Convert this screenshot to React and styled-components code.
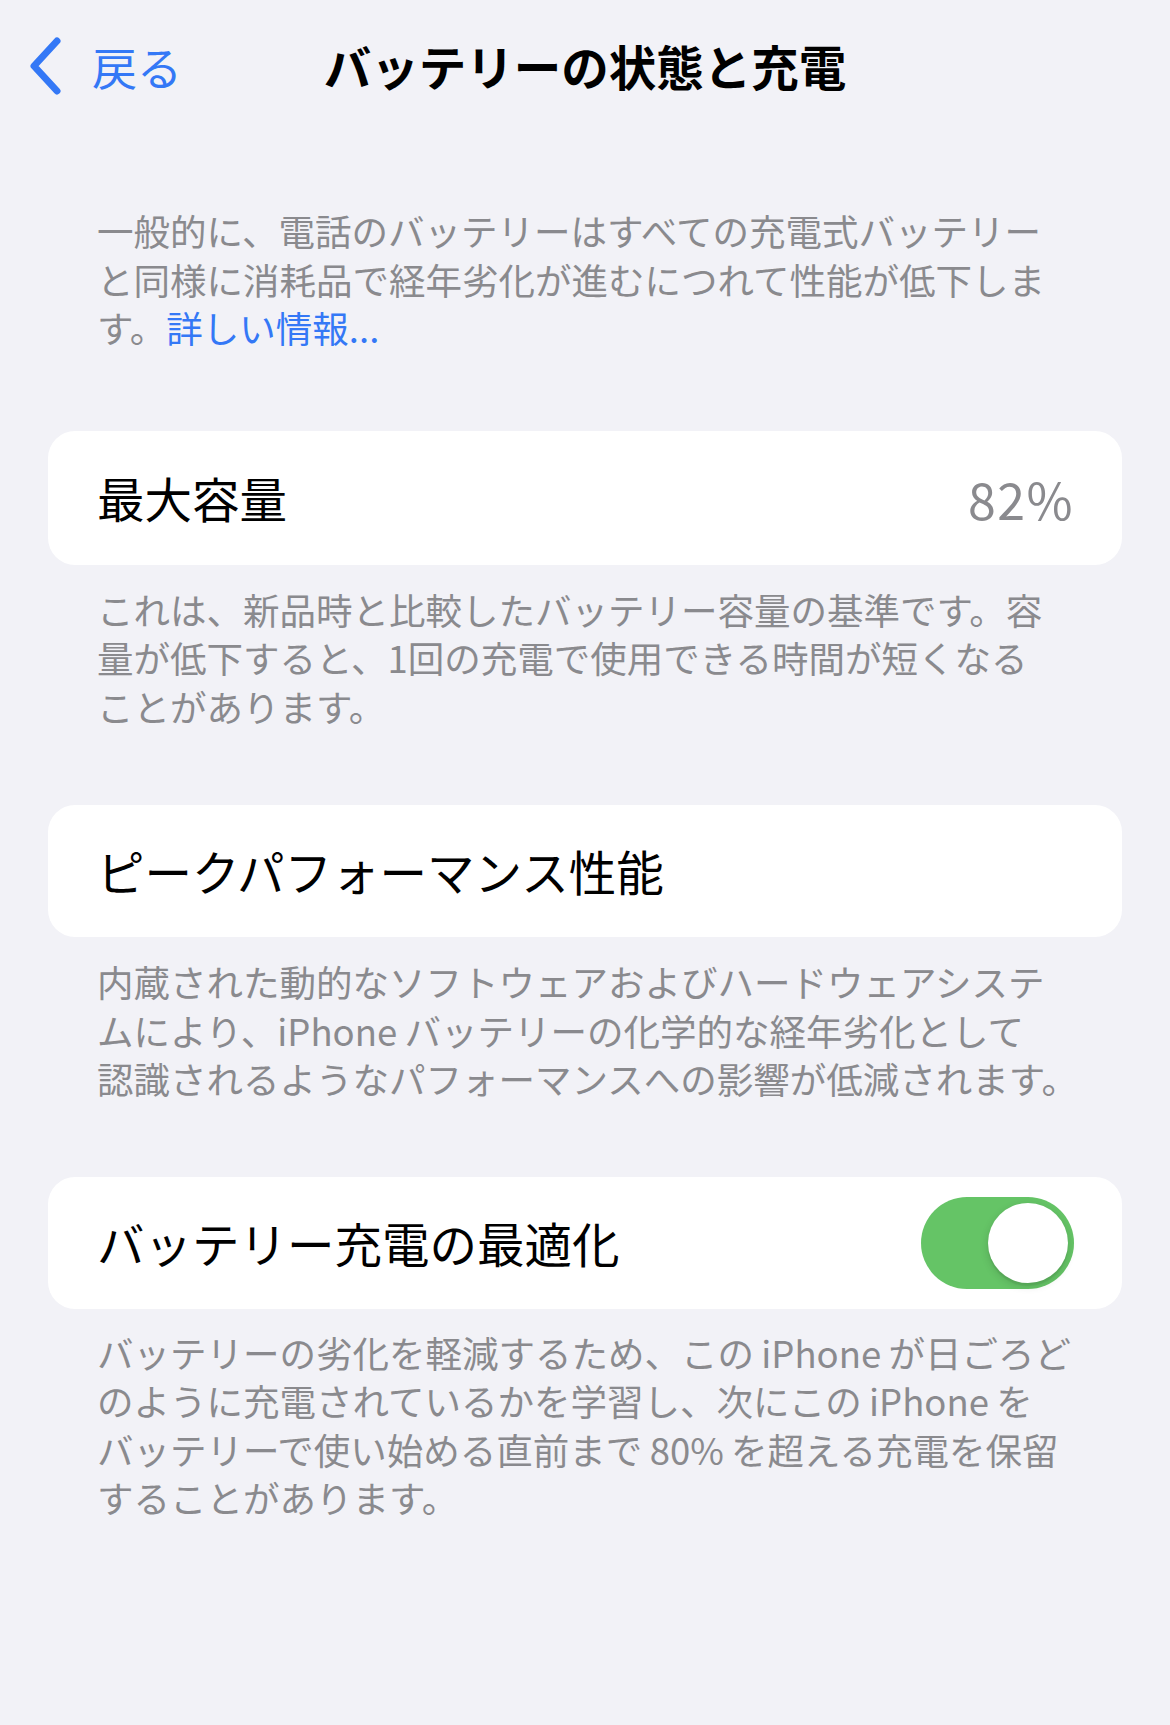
import React, { useState } from "react";
import styled, { createGlobalStyle } from "styled-components";

const GlobalStyle = createGlobalStyle`
  html, body {
    margin: 0;
    padding: 0;
    background: #f2f2f7;
  }
  body {
    font-family: "Noto Sans CJK JP", "Noto Sans", sans-serif;
    -webkit-font-smoothing: antialiased;
  }
`;

const Screen = styled.div`
  width: 1170px;
  min-height: 1725px;
  background: #f2f2f7;
  display: flex;
  flex-direction: column;
`;

const NavBar = styled.div`
  height: 132px;
  display: grid;
  grid-template-columns: 1fr auto 1fr;
  align-items: center;
`;

const BackButton = styled.button`
  display: flex;
  align-items: center;
  gap: 30px;
  padding: 0 0 0 28px;
  border: none;
  background: none;
  color: #3478f6;
  font-family: inherit;
  font-size: 45px;
  line-height: 1;
  justify-self: start;
  cursor: pointer;
`;

const Title = styled.h1`
  margin: 0;
  font-size: 47.5px;
  font-weight: 700;
  color: #000;
  line-height: 1;
`;

const Content = styled.div`
  display: flex;
  flex-direction: column;
  padding: 0 48px;
`;

const Note = styled.p`
  margin: ${(p) => p.$top}px 0 0;
  padding: 0 49px;
  font-size: 36.5px;
  line-height: 48.5px;
  color: #8a8a8e;
  white-space: nowrap;
`;

const Link = styled.a`
  color: #3478f6;
  text-decoration: none;
`;

const Card = styled.div`
  margin-top: ${(p) => p.$top}px;
  height: ${(p) => p.$h || 132}px;
  background: #fff;
  border-radius: 27px;
  display: flex;
  align-items: center;
  justify-content: space-between;
  padding: 0 48px 0 49px;
`;

const Label = styled.span`
  font-size: 47.5px;
  color: #000;
  line-height: 1;
`;

const Value = styled.span`
  font-size: 50px;
  letter-spacing: 1.5px;
  color: #8a8a8e;
  line-height: 1;
`;

const Toggle = styled.button`
  width: 153px;
  height: 92px;
  border: none;
  border-radius: 46px;
  padding: 6px;
  background: ${(p) => (p.$on ? "#65c466" : "#e9e9eb")};
  display: flex;
  justify-content: ${(p) => (p.$on ? "flex-end" : "flex-start")};
  align-items: center;
  cursor: pointer;
`;

const Knob = styled.span`
  width: 80px;
  height: 80px;
  border-radius: 50%;
  background: #fff;
  box-shadow: 0 3px 8px rgba(0, 0, 0, 0.15), 0 3px 1px rgba(0, 0, 0, 0.06);
`;

const Chevron = () => (
  <svg width="34" height="58" viewBox="0 0 34 58" fill="none">
    <path
      d="M29 4 L6 29 L29 54"
      stroke="#3478f6"
      strokeWidth="7"
      strokeLinecap="round"
      strokeLinejoin="round"
    />
  </svg>
);

export default function App() {
  const [optimized, setOptimized] = useState(true);

  return (
    <Screen>
      <GlobalStyle />
      <NavBar>
        <BackButton>
          <Chevron />
          戻る
        </BackButton>
        <Title>バッテリーの状態と充電</Title>
        <span />
      </NavBar>
      <Content>
        <Note $top={75}>
          一般的に、電話のバッテリーはすべての充電式バッテリー
          <br />
          と同様に消耗品で経年劣化が進むにつれて性能が低下しま
          <br />
          す。<Link href="#">詳しい情報...</Link>
        </Note>

        <Card $top={78} $h={134}>
          <Label>最大容量</Label>
          <Value>82%</Value>
        </Card>
        <Note $top={21}>
          これは、新品時と比較したバッテリー容量の基準です。容
          <br />
          量が低下すると、1回の充電で使用できる時間が短くなる
          <br />
          ことがあります。
        </Note>

        <Card $top={74}>
          <Label>ピークパフォーマンス性能</Label>
        </Card>
        <Note $top={21}>
          内蔵された動的なソフトウェアおよびハードウェアシステ
          <br />
          ムにより、iPhone{"\u2009"}バッテリーの化学的な経年劣化として
          <br />
          認識されるようなパフォーマンスへの影響が低減されます。
        </Note>

        <Card $top={73}>
          <Label>バッテリー充電の最適化</Label>
          <Toggle $on={optimized} onClick={() => setOptimized(!optimized)}>
            <Knob />
          </Toggle>
        </Card>
        <Note $top={20}>
          バッテリーの劣化を軽減するため、この{"\u2009"}iPhone{"\u2009"}が日ごろど
          <br />
          のように充電されているかを学習し、次にこの{"\u2009"}iPhone{"\u2009"}を
          <br />
          バッテリーで使い始める直前まで{"\u2009"}80%{"\u2009"}を超える充電を保留
          <br />
          することがあります。
        </Note>
      </Content>
    </Screen>
  );
}
